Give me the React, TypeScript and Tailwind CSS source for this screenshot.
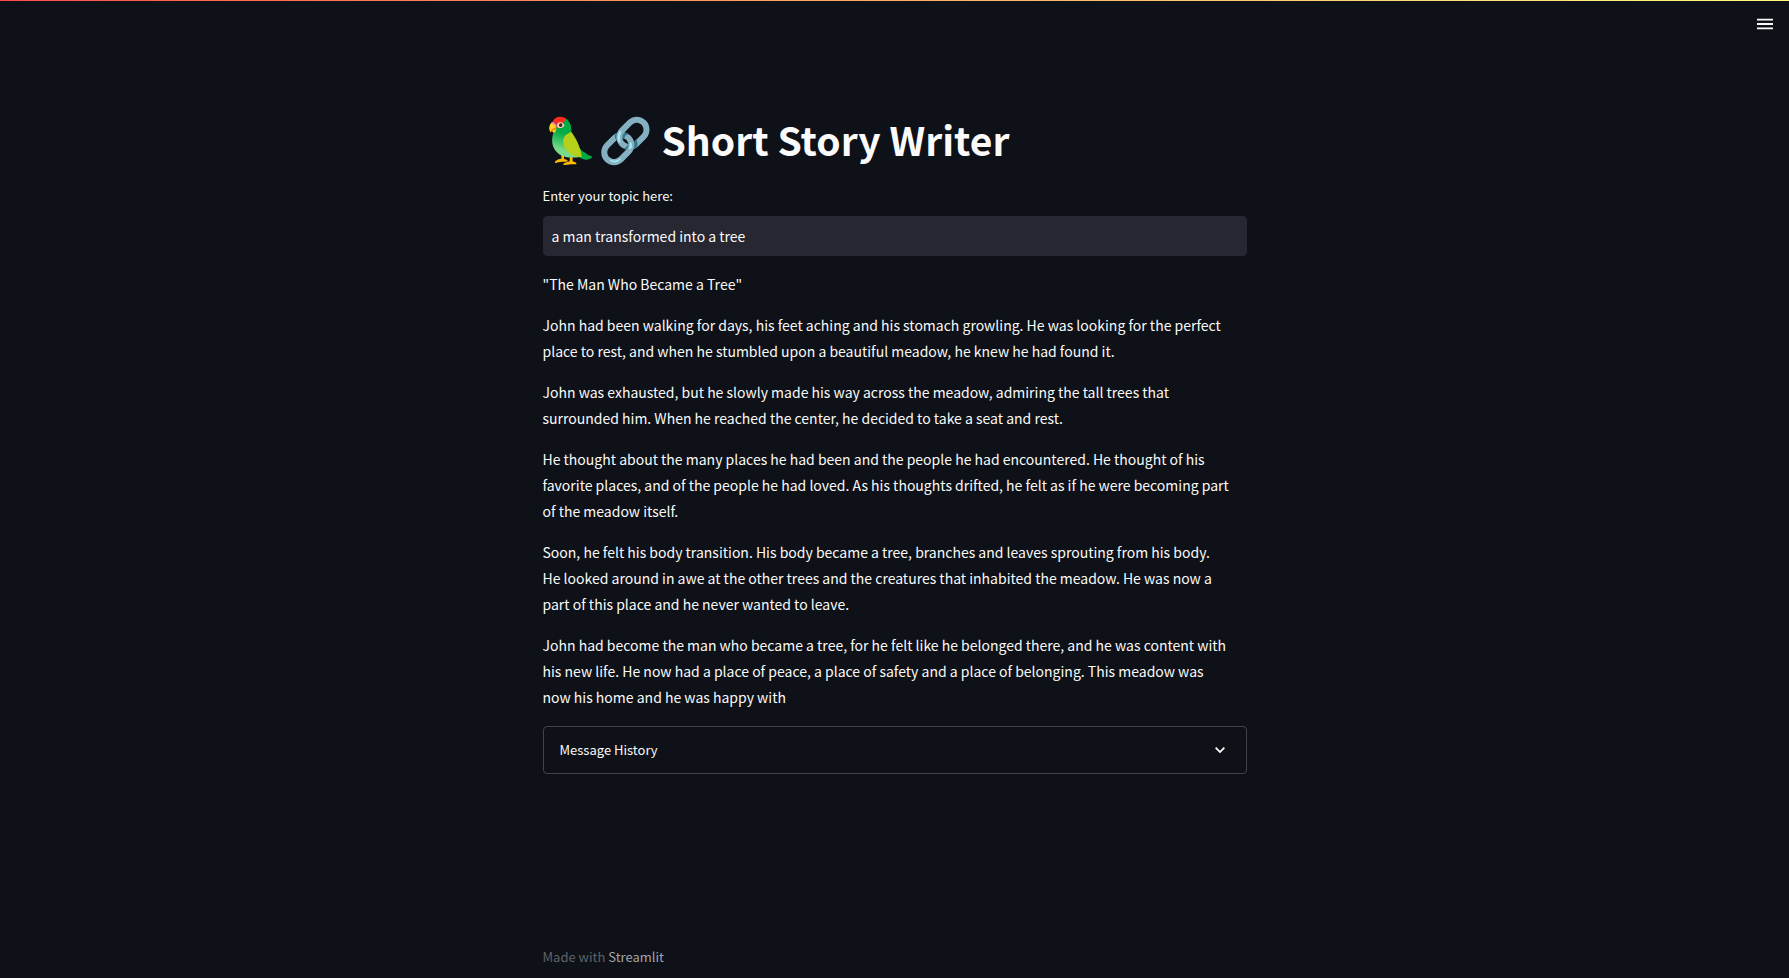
import { useState } from "react";

// Non-breaking spaces keep short phrases together at the line ends.
const story: string[] = [
  '"The Man Who Became a Tree"',
  "John had been walking for days, his feet aching and his stomach growling. He was looking for the perfect place to rest, and when he stumbled upon a beautiful meadow, he knew he had found it.",
  "John was exhausted, but he slowly made his way across the meadow, admiring the tall trees that surrounded him. When he reached the center, he decided to take a seat and rest.",
  "He thought about the many places he had been and the people he had encountered. He thought of his favorite places, and of the people he had loved. As his thoughts drifted, he felt as if he were becoming part of\u00a0the meadow itself.",
  "Soon, he felt his body transition. His body became a tree, branches and leaves sprouting from his body. He\u00a0looked around in awe at the other trees and the creatures that inhabited the meadow. He was now a part\u00a0of\u00a0this place and he never wanted to leave.",
  "John had become the man who became a tree, for he felt like he belonged there, and he was content with his new life. He now had a place of peace, a place of safety and a place of belonging. This meadow was now\u00a0his home and he was happy with",
];

function Header() {
  return (
    <header>
      <div className="h-px bg-linear-to-r from-[#ff4b4b] to-[#fffd80]" />
      <div className="flex justify-end pt-[11px] pr-3">
        <button type="button" aria-label="Main menu" className="flex size-6 items-center justify-center text-[#fafafa]">
          <svg viewBox="0 0 16 12" className="h-3 w-4" fill="currentColor" aria-hidden="true">
            <path d="M0 .7h16v1.8H0zM0 5.1h16v1.8H0zM0 9.5h16v1.8H0z" />
          </svg>
        </button>
      </div>
    </header>
  );
}

function History() {
  const [open, setOpen] = useState(false);
  return (
    <section className="rounded-sm border border-[#414348]">
      <button
        type="button"
        aria-expanded={open}
        onClick={() => setOpen(!open)}
        className="flex w-full items-center justify-between px-4 py-3 text-[13px] leading-[22px]"
      >
        <span>Message History</span>
        <svg viewBox="0 0 8 8" className="mr-[5px] size-[10px]" fill="currentColor" aria-hidden="true">
          <path d="M1 1.5l-1 1 4 4 4-4-1-1-3 3-3-3z" />
        </svg>
      </button>
      {open && <p className="px-4 pb-4 text-[14px] leading-[26px]">{story[0]}</p>}
    </section>
  );
}

export default function App() {
  const [topic, setTopic] = useState("a man transformed into a tree");
  return (
    <div className="flex min-h-screen flex-col bg-[#0e1117] font-['Noto_Sans_CJK_SC','Noto_Sans_CJK_JP',sans-serif] text-[#fafafa]">
      <Header />
      <main className="mx-auto w-full max-w-[736px] grow px-4 pt-[75px]">
        <h1 className="flex items-baseline text-[39px] leading-[53px] font-bold">
          <span className="mr-[9px] text-[44px]">🦜🔗</span>
          <span>Short Story Writer</span>
        </h1>
        <label htmlFor="topic" className="mt-[19px] block text-[13px] leading-[22px]">
          Enter your topic here:
        </label>
        <input
          id="topic"
          type="text"
          value={topic}
          onChange={(e) => setTopic(e.target.value)}
          className="mt-[9px] block h-10 w-full rounded-sm border border-[#262730] bg-[#262730] px-2 text-[14px] outline-none"
        />
        <article className="mt-[15px] mb-4 flex flex-col gap-[15px] text-[14px] leading-[26px]">
          {story.map((text) => (
            <p key={text}>{text}</p>
          ))}
        </article>
        <History />
      </main>
      <footer className="mx-auto w-full max-w-[736px] px-4 pb-[10px] text-[13px] leading-[22px] text-[#5f6268]">
        Made with{" "}
        <a href="https://streamlit.io" className="text-[#a3a4a7]">
          Streamlit
        </a>
      </footer>
    </div>
  );
}
